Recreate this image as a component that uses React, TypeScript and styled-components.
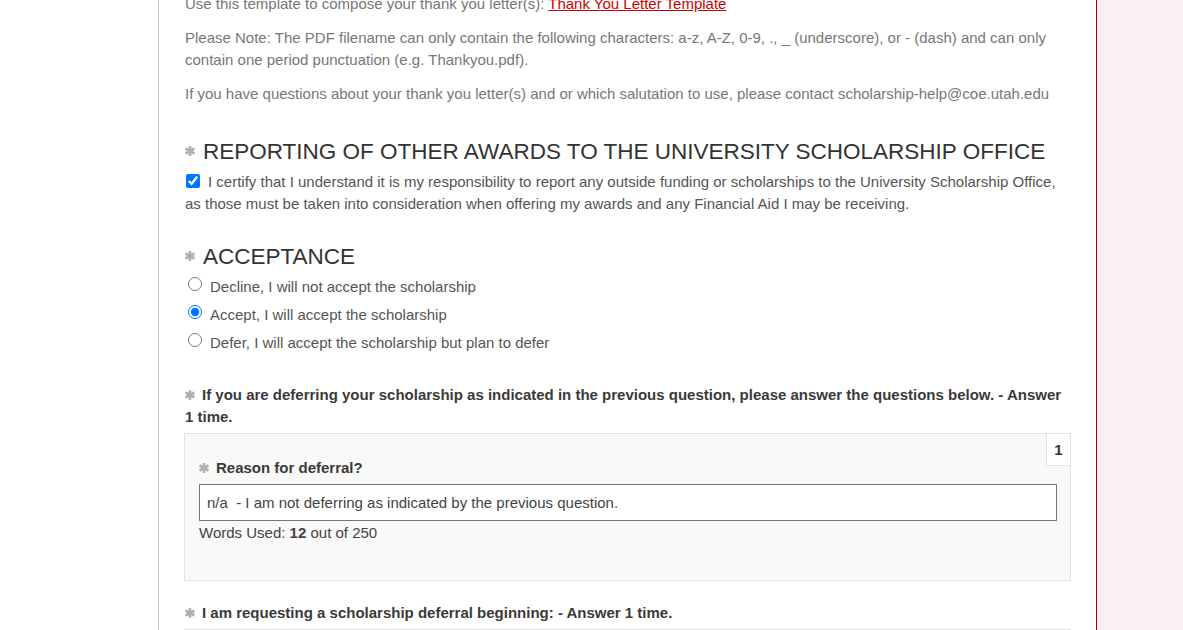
import React from "react";
import styled, { createGlobalStyle } from "styled-components";

const Global = createGlobalStyle`
  html, body { margin: 0; padding: 0; background: #fff; }
  body { font-family: "Liberation Sans", Arial, sans-serif; overflow: hidden; }
  * { box-sizing: border-box; }
`;

const Page = styled.div`
  display: flex;
  width: 1183px;
  height: 630px;
  overflow: hidden;
`;

const Gutter = styled.div`
  width: 158px;
  flex: none;
  background: #fff;
`;

const Main = styled.main`
  flex: none;
  width: 938px;
  border-left: 1px solid #c8c8c8;
  padding: 0 25px 0 26px;
  display: flex;
  flex-direction: column;
`;

const Side = styled.aside`
  flex: 1;
  border-left: 1px solid #b00000;
  background: #fbf0f1;
`;

const Intro = styled.p<{ $first?: boolean }>`
  margin: ${(p) => (p.$first ? "-7px" : "12px")} 0 0;
  font-size: 15px;
  line-height: 22px;
  color: #777;
`;

const Link = styled.a`
  color: #cc0000;
  text-decoration: underline;
`;

const Heading = styled.h2<{ $gap: number }>`
  margin: ${(p) => p.$gap}px 0 0;
  font-size: 22.5px;
  line-height: 28px;
  font-weight: 400;
  color: #333;
  display: flex;
  align-items: center;
  gap: 8px;
`;

const StarIcon = styled.svg<{ $lift?: number }>`
  flex: none;
  width: 10px;
  height: 10px;
  position: relative;
  top: ${(p) => -(p.$lift ?? 0)}px;
`;

const Star = ({ lift }: { lift?: number }) => (
  <StarIcon $lift={lift} viewBox="0 0 10 10">
    <g stroke="#b0b0b0" strokeWidth="2.6" strokeLinecap="butt">
      <line x1="5" y1="0" x2="5" y2="10" />
      <line x1="0.6" y1="2.5" x2="9.4" y2="7.5" />
      <line x1="0.6" y1="7.5" x2="9.4" y2="2.5" />
    </g>
  </StarIcon>
);

const Certify = styled.label`
  display: block;
  margin-top: 5px;
  font-size: 15px;
  line-height: 22px;
  color: #555;
`;

const Check = styled.input`
  width: 14px;
  height: 14px;
  margin: 0 8px 0 1px;
  vertical-align: -1px;
  accent-color: #0075ff;
`;

const RadioList = styled.div`
  margin-top: 1px;
  display: flex;
  flex-direction: column;
`;

const RadioRow = styled.label`
  display: flex;
  align-items: center;
  height: 28px;
  font-size: 15px;
  color: #555;
`;

const Radio = styled.input`
  width: 14px;
  height: 14px;
  margin: 0 8px 0 3px;
  position: relative;
  top: -2px;
  accent-color: #0075ff;
`;

const Question = styled.div<{ $gap: number }>`
  margin: ${(p) => p.$gap}px 0 0;
  font-size: 15px;
  line-height: 22px;
  font-weight: 700;
  color: #3a3a3a;
`;

const QStar = styled.span`
  display: inline-block;
  margin-right: 7px;
`;

const RepeatBox = styled.section<{ $open?: boolean }>`
  position: relative;
  margin: 5px 0 0 -1px;
  background: #f9f9f9;
  border: 1px solid #e3e3e3;
  padding: ${(p) => (p.$open ? "23px 13px 36px 14px" : "0")};
  ${(p) => (p.$open ? "" : "min-height: 20px;")}
`;

const Badge = styled.div`
  position: absolute;
  top: 0;
  right: 0;
  width: 24px;
  height: 32px;
  background: #fff;
  border-left: 1px solid #e3e3e3;
  border-bottom: 1px solid #e3e3e3;
  font-size: 15px;
  font-weight: 700;
  color: #333;
  display: flex;
  align-items: center;
  justify-content: center;
`;

const Field = styled.div`
  margin-top: 5px;
  height: 37px;
  border: 1px solid #767676;
  background: #fff;
  padding: 0 7px;
  display: flex;
  align-items: center;
  font-size: 15px;
  color: #444;
  white-space: pre;
`;

const Counter = styled.div`
  margin-top: 1px;
  font-size: 15px;
  line-height: 22px;
  color: #444;
`;

export default function App() {
  return (
    <>
      <Global />
      <Page>
        <Gutter />
        <Main>
          <Intro $first>
            Use this template to compose your thank you letter(s):{" "}
            <Link href="#">Thank You Letter Template</Link>
          </Intro>
          <Intro>
            Please Note: The PDF filename can only contain the following characters: a-z, A-Z, 0-9, ., _ (underscore), or - (dash) and can only contain one period punctuation (e.g. Thankyou.pdf).
          </Intro>
          <Intro>
            If you have questions about your thank you letter(s) and or which salutation to use, please contact scholarship-help@coe.utah.edu
          </Intro>

          <Heading $gap={33}>
            <Star lift={1} />
            REPORTING OF OTHER AWARDS TO THE UNIVERSITY SCHOLARSHIP OFFICE
          </Heading>
          <Certify>
            <Check type="checkbox" defaultChecked />
            I certify that I understand it is my responsibility to report any outside funding or scholarships to the University Scholarship Office, as those must be taken into consideration when offering my awards and any Financial Aid I may be receiving.
          </Certify>

          <Heading $gap={28}>
            <Star lift={1} />
            ACCEPTANCE
          </Heading>
          <RadioList>
            <RadioRow>
              <Radio type="radio" name="acc" />
              Decline, I will not accept the scholarship
            </RadioRow>
            <RadioRow>
              <Radio type="radio" name="acc" defaultChecked />
              Accept, I will accept the scholarship
            </RadioRow>
            <RadioRow>
              <Radio type="radio" name="acc" />
              Defer, I will accept the scholarship but plan to defer
            </RadioRow>
          </RadioList>

          <Question $gap={28}>
            <QStar><Star /></QStar>
            If you are deferring your scholarship as indicated in the previous question, please answer the questions below. - Answer 1 time.
          </Question>
          <RepeatBox $open>
            <Badge>1</Badge>
            <Question $gap={0}>
              <QStar><Star /></QStar>
              Reason for deferral?
            </Question>
            <Field>{"n/a  - I am not deferring as indicated by the previous question."}</Field>
            <Counter>
              Words Used: <b>12</b> out of 250
            </Counter>
          </RepeatBox>

          <Question $gap={21}>
            <QStar><Star /></QStar>
            I am requesting a scholarship deferral beginning: - Answer 1 time.
          </Question>
          <RepeatBox />
        </Main>
        <Side />
      </Page>
    </>
  );
}
